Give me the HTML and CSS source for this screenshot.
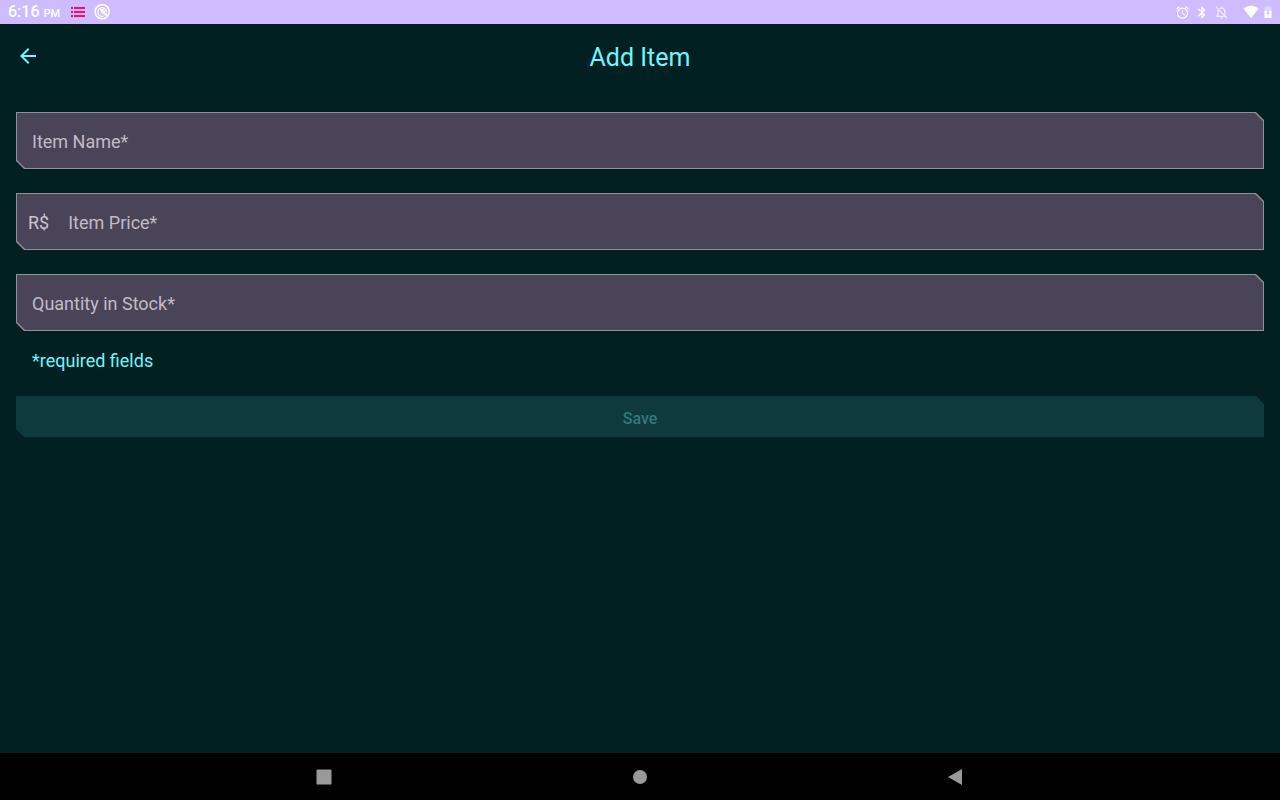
FILE: index.html
```html
<!DOCTYPE html>
<html lang="en">
<head>
<meta charset="utf-8">
<meta name="viewport" content="width=device-width, initial-scale=1">
<title>Add Item</title>
<link rel="stylesheet" href="styles.css">
</head>
<body>
<div class="status-bar">
  <div class="status-left">
    <span class="clock">6:16 <small>PM</small></span>
    <svg width="16" height="12" viewBox="0 0 16 12" aria-hidden="true"><path fill="#e9a0dc" d="M1 0h14v12H1z" opacity=".45"/><path fill="#d81b78" d="M1 1h2v2H1zM4 1h11v2H4zM1 5h2v2H1zM4 5h11v2H4zM1 9h2v2H1zM4 9h11v2H4z"/></svg>
    <svg width="16" height="16" viewBox="0 0 16 16" aria-hidden="true"><path fill="none" stroke="#fff" stroke-width="1.6" d="M12.400 13.300A7 7 0 1 1 14 11.600"/><path fill="none" stroke="#fff" stroke-width="1.100" d="M9.500 12A4.300 4.300 0 1 1 12.300 8.500"/><path fill="#fff" d="M5.500 5.500c2.500-1.500 5.400-.2 5.600 2.600l3.500 4.200-1.200 1.200-4-3.400C7.300 10 8.200 8 5.500 5.500z"/></svg>
  </div>
  <div class="status-right">
    <svg width="15" height="15" viewBox="0 0 24 24" aria-hidden="true"><path fill="#fff" d="M22 5.720l-4.600-3.860-1.290 1.530 4.600 3.860L22 5.720zM7.880 3.390L6.600 1.860 2 5.710l1.290 1.530 4.590-3.850zM12.500 8H11v6l4.750 2.850.75-1.230-4-2.370V8zM12 4a9 9 0 1 0 0 18 9 9 0 0 0 0-18zm0 16a7 7 0 1 1 0-14 7 7 0 0 1 0 14z"/></svg>
    <svg width="14" height="15" viewBox="0 0 24 24" aria-hidden="true"><path fill="#fff" stroke="#fff" stroke-width=".4" d="M17.710 7.710 12 2h-1v7.590L6.410 5 5 6.410 10.590 12 5 17.590 6.410 19 11 14.410V22h1l5.710-5.710-4.300-4.290 4.300-4.290zM13 5.830l1.880 1.880L13 9.590V5.830zm1.880 10.460L13 18.170v-3.760l1.880 1.880z"/></svg>
    <svg class="muted" width="15" height="15" viewBox="0 0 24 24" aria-hidden="true"><path fill="none" stroke="#fff" stroke-width="2" d="M3 3l18 18M7 8c-1 2-1 4-1 9l-2 1h14M9 6c1-.8 2-1.200 3-1.200 3.500 0 5.500 2.700 5.500 6.200v4M12 5V2"/><path fill="#fff" d="M10 20h4a2 2 0 0 1-4 0z"/></svg>
    <svg class="wifi" width="16" height="14" viewBox="0 0 16 14" aria-hidden="true"><path fill="#fff" d="M.5 3.800C5-.3 11-.3 15.500 3.800L8 13z"/></svg>
    <svg width="8" height="14" viewBox="0 0 8 14" aria-hidden="true"><path fill="#fff" opacity=".4" d="M2.500 1h3v1.300h2V6h-7V2.300h2z"/><path fill="#fff" d="M.5 6h7v7h-7z"/><path fill="#cfbcff" d="M4.500 4.500v3.200h1.500L3.500 11V8.500H2z"/></svg>
  </div>
</div>

<header class="app-bar">
  <button class="back" type="button" aria-label="Back"><svg width="24" height="24" viewBox="0 0 24 24" aria-hidden="true"><path fill="#6ff6ff" d="M20 11H7.830l5.590-5.590L12 4l-8 8 8 8 1.410-1.410L7.830 13H20v-2z"/></svg></button>
  <h1 class="title">Add Item</h1>
</header>

<main class="content">
  <form class="form">
    <div class="field"><input class="input" type="text" aria-label="Item Name" placeholder="Item Name*"></div>
    <div class="field"><label class="input priced"><span>R$</span><input class="price" type="text" inputmode="decimal" aria-label="Item Price" placeholder="Item Price*"></label></div>
    <div class="field"><input class="input" type="text" inputmode="numeric" aria-label="Quantity in Stock" placeholder="Quantity in Stock*"></div>
    <p class="hint">*required fields</p>
    <button class="save" type="submit" disabled>Save</button>
  </form>
</main>

<nav class="nav-bar">
  <button class="nav-button" type="button" aria-label="Recent apps"><svg width="16" height="16" viewBox="0 0 16 16" aria-hidden="true"><rect x=".5" y=".5" width="15" height="15" rx="1" fill="#999"/></svg></button>
  <button class="nav-button" type="button" aria-label="Home"><svg width="16" height="16" viewBox="0 0 16 16" aria-hidden="true"><circle cx="8" cy="8" r="7" fill="#999"/></svg></button>
  <button class="nav-button" type="button" aria-label="Back"><svg width="16" height="16" viewBox="0 0 16 16" aria-hidden="true"><path fill="#999" d="M14 0v16L0 8z"/></svg></button>
</nav>
</body>
</html>
```

FILE: styles.css
```css
* {
  box-sizing: border-box;
}

body {
  margin: 0;
  min-height: 100vh;
  display: flex;
  flex-direction: column;
  background: #002021;
  color: #6ff6ff;
  font-family: Roboto, sans-serif;
}

button,
input {
  border: 0;
  padding: 0;
  background: none;
  color: inherit;
  font: inherit;
}

svg {
  display: block;
}

.status-bar {
  display: flex;
  justify-content: space-between;
  align-items: center;
  height: 24px;
  padding: 0 8px;
  background: #cfbcff;
  color: #fff;
}

.status-left,
.status-right {
  display: flex;
  align-items: center;
}

.status-left {
  gap: 8px;
}

.clock {
  margin-right: 2px;
  padding-top: 2px;
  font-size: 16px;
  font-weight: 500;
  line-height: 22px;
}

.clock small {
  font-size: 11px;
}

.status-right {
  gap: 5px;
}

.muted {
  opacity: 0.7;
}

.wifi {
  margin-left: 9px;
}

.app-bar {
  display: grid;
  grid-template-columns: 48px 1fr 48px;
  align-items: center;
  height: 64px;
  padding: 0 4px;
}

.back {
  display: grid;
  place-items: center;
  height: 48px;
}

.title {
  margin: 0;
  padding-top: 4px;
  font-size: 25px;
  font-weight: 400;
  line-height: 32px;
  text-align: center;
}

.content {
  flex: 1;
  padding: 24px 16px;
}

.form {
  display: flex;
  flex-direction: column;
  gap: 24px;
}

.field,
.input,
.save {
  clip-path: polygon(0 0, calc(100% - 8px) 0, 100% 8px, 100% 100%, 8px 100%, 0 calc(100% - 8px));
}

.field {
  padding: 1px;
  background: #938f99;
}

.input {
  display: flex;
  align-items: center;
  width: 100%;
  height: 55px;
  padding: 2px 15px 0;
  background: #4a4458;
  color: #cac4d0;
  font-size: 18px;
}

.input::placeholder,
.price::placeholder {
  color: #c1bbc8;
  opacity: 1;
}

.priced {
  gap: 19px;
  padding-left: 11px;
}

.price {
  flex: 1;
  min-width: 0;
}

.hint {
  margin: -6px 16px -1px;
  font-size: 18px;
  line-height: 24px;
}

.save {
  height: 41px;
  padding-top: 4px;
  background: #0f3a3d;
  color: #32797d;
  font-size: 16px;
  font-weight: 500;
}

.nav-bar {
  display: grid;
  grid-template-columns: repeat(3, 1fr);
  height: 47px;
  padding: 0 13%;
  background: #000;
}

.nav-button {
  display: grid;
  place-items: center;
}
```
